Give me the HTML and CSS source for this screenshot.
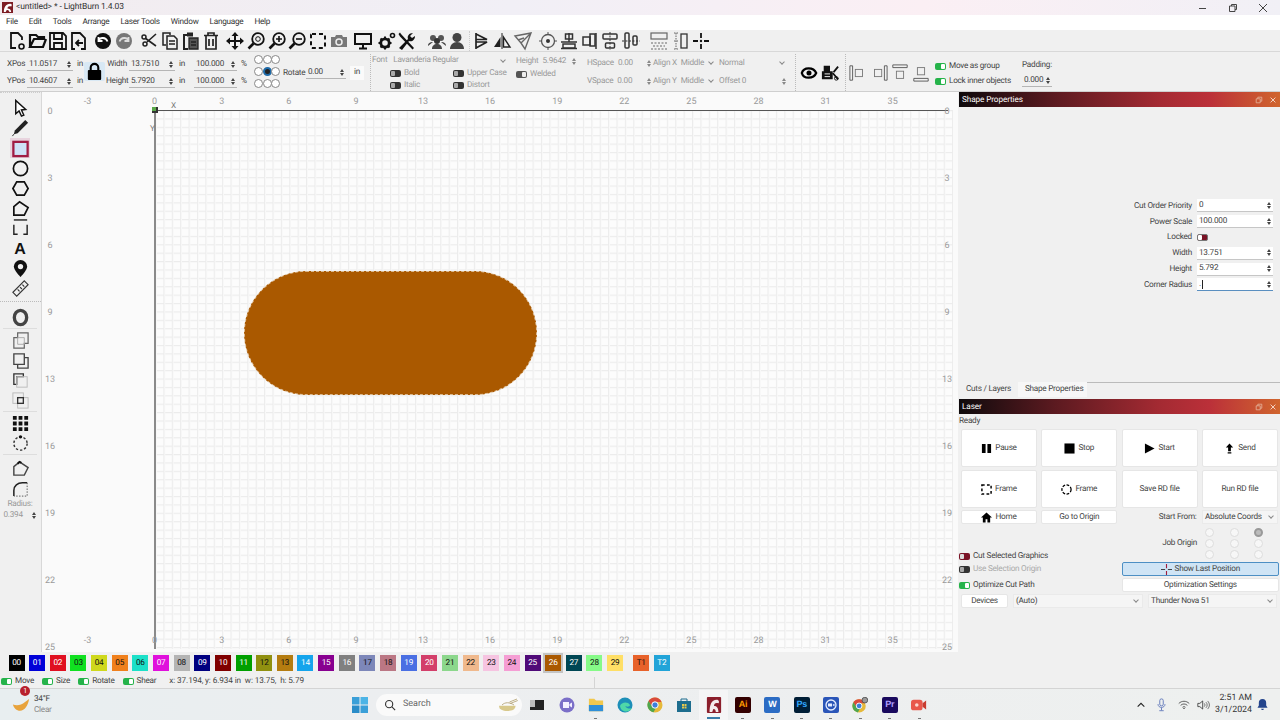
FILE: index.html
```html
<!DOCTYPE html>
<html lang="en">
<head>
    <meta charset="UTF-8">
    <title>LightBurn 1.4.03</title>
    <link rel="stylesheet" href="styles.css">
</head>
<body>

<div class="titlebar">
    <svg class="logo" viewBox="0 0 12 12"><rect width="12" height="12" fill="#7d1d24"/><path d="M2 11C2 6 4 2 9 2c2 0 2 2 1 3-2-1-4 0-4 2 2 0 4 1 4 4H8C8 9 6 8 5 9l-1 2z" fill="#fff"/></svg>
    <span class="wintitle">&lt;untitled&gt; * - LightBurn 1.4.03</span>
    <div class="winctl">
        <svg viewBox="0 0 10 10"><path d="M1 5.500h7" stroke="#444" fill="none"/></svg>
        <svg viewBox="0 0 10 10"><path d="M1.500 3h5.500v5.500H1.500zM3.500 3V1.500h5v5H7" stroke="#444" fill="none"/></svg>
        <svg viewBox="0 0 10 10"><path d="M1 1l8 8M9 1l-8 8" stroke="#444" fill="none"/></svg>
    </div>
</div>

<div class="menubar">
    <span>File</span><span>Edit</span><span>Tools</span><span>Arrange</span><span>Laser Tools</span><span>Window</span><span>Language</span><span>Help</span>
</div>

<div class="toolbar">
    <div class="tgroup">
        <svg viewBox="0 0 20 20"><path d="M9 17H4V2h7l4 4v3" fill="none" stroke="#111" stroke-width="1.800"/><circle cx="14.500" cy="15.500" r="2.500" fill="none" stroke="#111" stroke-width="1.600"/></svg>
        <svg viewBox="0 0 20 20"><path d="M2 16V4h6l2 2h6v2H6l-4 8h13l3-8" fill="none" stroke="#111" stroke-width="2.200"/></svg>
        <svg viewBox="0 0 20 20"><path d="M2 2h13l3 3v13H2zM6 3v5h8V3M6 18v-6h8v6" fill="none" stroke="#111" stroke-width="1.800"/></svg>
        <svg viewBox="0 0 20 20"><path d="M6 18H3V2h8l5 5v11h-4" fill="none" stroke="#111" stroke-width="1.800"/><path d="M7 12h7M10 9l-3 3 3 3" fill="none" stroke="#111" stroke-width="1.800"/></svg>
    </div>
    <div class="tgroup gap4">
        <svg viewBox="0 0 20 20"><circle cx="10" cy="10" r="8" fill="#111"/><path d="M5.500 9.500C7 6 13 6 14.500 10.500M5.500 6v4h4" fill="none" stroke="#fff" stroke-width="1.800"/></svg>
        <svg viewBox="0 0 20 20"><circle cx="10" cy="10" r="8" fill="#777"/><path d="M14.500 9.500C13 6 7 6 5.500 10.500M14.500 6v4h-4" fill="none" stroke="#ddd" stroke-width="1.800"/></svg>
    </div>
    <div class="tgroup gap5">
        <svg viewBox="0 0 20 20"><path d="M17 3L8 11M17 15L6 7" stroke="#222" stroke-width="1.600" fill="none"/><circle cx="5" cy="6" r="2" fill="none" stroke="#222" stroke-width="1.500"/><circle cx="6" cy="13" r="2" fill="none" stroke="#222" stroke-width="1.500"/></svg>
        <svg viewBox="0 0 20 20"><path d="M6 14H3V2h7v2" fill="none" stroke="#222" stroke-width="1.500"/><path d="M7 5h7l3 3v10H7zM9 10h6M9 13h6" fill="none" stroke="#222" stroke-width="1.500"/></svg>
        <svg viewBox="0 0 20 20"><path d="M6 4H3v14h4" fill="none" stroke="#222" stroke-width="2"/><rect x="6" y="1.500" width="6" height="4" fill="#222"/><path d="M8 7h9v11H8zM10 11h5M10 14h5" fill="#555" stroke="#222" stroke-width="1.300"/></svg>
        <svg viewBox="0 0 20 20"><path d="M3 4.500h14M7 4V2h6v2M5 5v13h10V5M8 8v7M12 8v7" fill="none" stroke="#222" stroke-width="1.700"/></svg>
    </div>
    <div class="tgroup gap4">
        <svg viewBox="0 0 20 20"><path d="M10 3v14M3 10h14" stroke="#111" stroke-width="2"/><path d="M10 1l3.500 4h-7zM10 19l3.500-4h-7zM1 10l4-3.500v7zM19 10l-4-3.500v7z" fill="#111"/></svg>
        <svg viewBox="0 0 20 20"><circle cx="12" cy="8" r="5.800" fill="none" stroke="#111" stroke-width="1.800"/><path d="M7.500 12.500l-5 5" stroke="#111" stroke-width="2.600"/><circle cx="12" cy="8" r="2.300" fill="none" stroke="#111"/></svg>
        <svg viewBox="0 0 20 20"><circle cx="12" cy="8" r="5.800" fill="none" stroke="#111" stroke-width="1.800"/><path d="M7.500 12.500l-5 5" stroke="#111" stroke-width="2.600"/><path d="M9 8h6M12 5v6" stroke="#111" stroke-width="1.600"/></svg>
        <svg viewBox="0 0 20 20"><circle cx="12" cy="8" r="5.800" fill="none" stroke="#111" stroke-width="1.800"/><path d="M7.500 12.500l-5 5" stroke="#111" stroke-width="2.600"/><path d="M9 8h6" stroke="#111" stroke-width="1.600"/></svg>
        <svg viewBox="0 0 20 20"><rect x="3" y="3" width="14" height="14" rx="1" fill="none" stroke="#111" stroke-width="2" stroke-dasharray="4 3"/></svg>
        <svg viewBox="0 0 20 20"><path d="M2 6h4l1-2h6l1 2h4v10H2z" fill="#777"/><circle cx="10" cy="11" r="3" fill="none" stroke="#eee" stroke-width="1.500"/></svg>
    </div>
    <div class="tgroup gap4">
        <svg viewBox="0 0 20 20"><path d="M2 3h16v10H2zM10 13v4M6 17.500h8" fill="none" stroke="#111" stroke-width="2"/></svg>
    </div>
    <div class="tgroup gap4">
        <svg viewBox="0 0 20 20"><circle cx="8" cy="12" r="4.200" fill="none" stroke="#111" stroke-width="2.800"/><path d="M8 5.500v2.500M8 16v2.500M1.500 12H4M12 12h2.500M3.500 7.500l1.500 1.500M11 15l1.500 1.500M3.500 16.500L5 15M11 9l1.500-1.500" stroke="#111" stroke-width="2"/><circle cx="15.500" cy="4.500" r="2" fill="none" stroke="#111" stroke-width="1.600"/></svg>
        <svg viewBox="0 0 20 20"><path d="M2 17L11 8c-1-3 1-6 5-6l-3 3 2 2 3-2c0 4-3 6-6 5l-7 9z" fill="#111"/><path d="M4 3l13 14-1.500 1.500L3 5.500 1.500 3 3 1.500z" fill="#111"/></svg>
    </div>
    <div class="tgroup gap9">
        <svg viewBox="0 0 20 20"><circle cx="6" cy="7" r="3" fill="#555"/><circle cx="14" cy="7" r="3" fill="#555"/><circle cx="10" cy="10" r="3" fill="#333"/><path d="M1 15c0-3 2-4 5-4M19 15c0-3-2-4-5-4M5 18c0-3 2-5 5-5s5 2 5 5z" fill="#444"/></svg>
        <svg viewBox="0 0 20 20"><circle cx="10" cy="6.500" r="4.500" fill="#444"/><path d="M3 18c0-4 3-7 7-7s7 3 7 7z" fill="#444"/></svg>
    </div>
    <div class="tgroup sepl">
        <svg viewBox="0 0 20 20"><path d="M4 2v16M4 3l11 5.500H4M4 11h11L4 17" fill="none" stroke="#222" stroke-width="1.700"/></svg>
        <svg viewBox="0 0 20 20"><path d="M10 2v16" stroke="#222"/><path d="M8.500 6v10H2z" fill="#222"/><path d="M11.500 6v10H18z" fill="none" stroke="#222" stroke-width="1.400"/></svg>
        <svg viewBox="0 0 20 20"><path d="M2 5l16-3-6 16-4-6zM8 12l10-10M5 9l6-2" fill="none" stroke="#666" stroke-width="1.400"/></svg>
    </div>
    <div class="tgroup gap5">
        <svg viewBox="0 0 20 20"><circle cx="10" cy="10" r="6.500" fill="none" stroke="#555" stroke-width="1.300"/><circle cx="10" cy="10" r="2" fill="#333"/><path d="M10 1v3M10 16v3M1 10h3M16 10h3" stroke="#555"/></svg>
        <svg viewBox="0 0 20 20"><path d="M2 11h16M10 2v9M2 17.500h16" stroke="#333" stroke-width="1.500"/><rect x="6.500" y="3" width="7" height="5" fill="none" stroke="#333" stroke-width="1.500"/><rect x="4" y="13" width="12" height="4" fill="none" stroke="#333" stroke-width="1.500"/></svg>
        <svg viewBox="0 0 20 20"><path d="M16 2v16" stroke="#333" stroke-width="1.500"/><rect x="3" y="6" width="7" height="8" fill="none" stroke="#333" stroke-width="1.500"/><rect x="10" y="3" width="5" height="12" fill="none" stroke="#333" stroke-width="1.500"/></svg>
        <svg viewBox="0 0 20 20"><path d="M10 1v18" stroke="#333" stroke-dasharray="2 1.500"/><rect x="3" y="3" width="14" height="5" rx="1" fill="none" stroke="#333" stroke-width="1.500"/><rect x="5.500" y="12" width="9" height="5" rx="1" fill="none" stroke="#333" stroke-width="1.500"/></svg>
        <svg viewBox="0 0 20 20"><path d="M1 10h18" stroke="#333" stroke-dasharray="2 1.500"/><rect x="4" y="2" width="4" height="15" rx="1" fill="none" stroke="#333" stroke-width="1.500"/><rect x="12" y="5" width="4" height="9" rx="1" fill="none" stroke="#333" stroke-width="1.500"/></svg>
    </div>
    <div class="tgroup gap8">
        <svg viewBox="0 0 20 20"><rect x="2" y="2" width="16" height="6" fill="none" stroke="#666" stroke-width="1.200"/><path d="M2 12h16M2 18h16M4 15h12" stroke="#666" stroke-dasharray="2 1.500"/></svg>
        <svg viewBox="0 0 20 20"><path d="M4 2h4M6 2v16M4 18h4M4 10h4" stroke="#666" stroke-dasharray="1.500 1"/><rect x="11" y="3" width="6" height="14" fill="none" stroke="#333" stroke-width="1.300"/></svg>
        <svg viewBox="0 0 20 20"><path d="M10 2v5M10 13v5M2 10h5M13 10h5" stroke="#111" stroke-width="1.800"/><circle cx="10" cy="10" r="1.200" fill="#111"/></svg>
    </div>
</div>

<div class="props">
    <div class="pcol w77">
        <div class="fld"><span class="lb">XPos</span><span class="val w47">11.0517<i class="spin"></i></span><span class="un">in</span></div>
        <div class="fld"><span class="lb">YPos</span><span class="val w47">10.4607<i class="spin"></i></span><span class="un">in</span></div>
    </div>
    <div class="lockbtn">
        <svg viewBox="0 0 20 20"><path d="M6 9V6a4 4 0 018 0v3" fill="none" stroke="#000" stroke-width="2.200"/><rect x="3" y="8.500" width="14" height="10.500" rx="1" fill="#000"/></svg>
    </div>
    <div class="pcol w85">
        <div class="fld"><span class="lb rt20">Width</span><span class="val w46">13.7510<i class="spin"></i></span><span class="un">in</span></div>
        <div class="fld"><span class="lb rt20">Height</span><span class="val w46">5.7920<i class="spin"></i></span><span class="un">in</span></div>
    </div>
    <div class="pcol w60">
        <div class="fld"><span class="val w43 ml4">100.000<i class="spin"></i></span><span class="un">%</span></div>
        <div class="fld"><span class="val w43 ml4">100.000<i class="spin"></i></span><span class="un">%</span></div>
    </div>
    <div class="radios">
        <i></i><i></i><i></i><i></i><i class="sel"></i><i></i><i></i><i></i><i></i>
    </div>
    <div class="rotate">
        <span class="lb">Rotate</span><span class="val w40">0.00<i class="spin"></i></span><span class="inbtn">in</span>
    </div>
    <div class="fontsec">
        <div class="fc w144">
            <div class="frow"><span>Font</span><span class="combo w118">Lavanderia Regular<i class="chev"></i></span></div>
            <div class="ftogs">
                <span class="tline"><i class="tog off"></i>Bold</span>
                <span class="tline"><i class="tog off"></i>Upper Case</span>
                <span class="tline"><i class="tog off"></i>Italic</span>
                <span class="tline"><i class="tog off"></i>Distort</span>
            </div>
        </div>
        <div class="fc w71">
            <div class="frow"><span>Height</span><span class="val w38 noline">5.9642<i class="spin"></i></span></div>
            <div class="tline up"><i class="tog midoff"></i>Welded</div>
        </div>
        <div class="fc w67 two">
            <div class="frow"><span>HSpace</span><span class="val w38 noline">0.00<i class="spin"></i></span></div>
            <div class="frow"><span>VSpace</span><span class="val w38 noline">0.00<i class="spin"></i></span></div>
        </div>
        <div class="fc w66 two">
            <div class="frow"><span>Align X</span><span class="combo w38 noline">Middle<i class="chev"></i></span></div>
            <div class="frow"><span>Align Y</span><span class="combo w38 noline">Middle<i class="chev"></i></span></div>
        </div>
        <div class="fc w71 two">
            <div class="frow"><span class="combo w71 noline">Normal<i class="chev"></i></span></div>
            <div class="frow"><span class="val w71 noline">Offset 0<i class="spin"></i></span></div>
        </div>
    </div>
    <div class="camsec">
        <svg viewBox="0 0 20 20"><path d="M2 10c2-7 13-7 16 0-3 7-14 7-16 0z" fill="none" stroke="#000" stroke-width="2.500"/><circle cx="10" cy="10" r="2.800" fill="#000"/></svg>
        <svg viewBox="0 0 20 20"><path d="M3 8V2h7v6h3v9H1V8z" fill="#111"/><path d="M19 3l-5 6M19 17l-6-7" stroke="#111" stroke-width="2"/><circle cx="17" cy="16" r="2" fill="none" stroke="#111"/><path d="M4 11h6M4 14h6" stroke="#fff"/></svg>
    </div>
    <div class="alignsec">
        <svg viewBox="0 0 20 20"><path d="M1 2h3v16H1z" fill="none" stroke="#555"/><rect x="7" y="6" width="8" height="8" fill="none" stroke="#777"/></svg>
        <svg viewBox="0 0 20 20"><path d="M16 2h3v16h-3z" fill="none" stroke="#555"/><rect x="5" y="6" width="8" height="8" fill="none" stroke="#777"/></svg>
        <svg viewBox="0 0 20 20"><path d="M2 1h16v3H2z" fill="none" stroke="#555"/><rect x="6" y="8" width="8" height="8" fill="none" stroke="#777"/></svg>
        <svg viewBox="0 0 20 20"><path d="M2 16h16v3H2z" fill="none" stroke="#555"/><rect x="6" y="4" width="8" height="8" fill="none" stroke="#777"/></svg>
    </div>
    <div class="groupsec">
        <span class="tline"><i class="tog on"></i>Move as group</span>
        <span class="tline"><i class="tog on"></i>Lock inner objects</span>
    </div>
    <div class="padsec">
        <span class="padlabel">Padding:</span>
        <span class="val w32">0.000<i class="spin"></i></span>
    </div>
</div>

<div class="middle">
    <div class="tools">
        <div class="tslot"><svg viewBox="0 0 20 20"><path d="M5 1.500v14l3.500-3 2.500 5.500 2.500-1-2.500-5.500 4.500-.5z" fill="#fff" stroke="#111" stroke-width="1.500"/></svg></div>
        <div class="tslot"><svg viewBox="0 0 20 20"><path d="M15 1l3 3L7 15l-4 1 1-4z" fill="#222"/><path d="M3 16L1.500 18" stroke="#222"/></svg></div>
        <div class="tslot active"><svg viewBox="0 0 20 20"><rect x="2.500" y="3" width="15" height="15" fill="#cfe2f7" stroke="#a01c44" stroke-width="2.400"/></svg></div>
        <div class="tslot"><svg viewBox="0 0 20 20"><circle cx="10" cy="10" r="7.500" fill="none" stroke="#111" stroke-width="1.800"/></svg></div>
        <div class="tslot"><svg viewBox="0 0 20 20"><path d="M6 3h8l4 7-4 7H6l-4-7z" fill="none" stroke="#111" stroke-width="1.800"/></svg></div>
        <div class="tslot"><svg viewBox="0 0 20 20"><path d="M3 8l6-5 9 6-4 8H3z" fill="none" stroke="#111" stroke-width="1.800"/></svg></div>
        <div class="tslot"><svg viewBox="0 0 20 20"><path d="M3 1h14" stroke="#222" stroke-width="1.500"/><path d="M3 6v10h4M17 6v10h-4" fill="none" stroke="#222" stroke-width="1.500"/></svg></div>
        <div class="tslot"><span class="aglyph">A</span></div>
        <div class="tslot"><svg viewBox="0 0 20 20"><path d="M10 1a7 7 0 00-7 7c0 4 7 11 7 11s7-7 7-11a7 7 0 00-7-7z" fill="#111"/><circle cx="10" cy="8" r="2.800" fill="#f0f0f0"/></svg></div>
        <div class="tslot"><svg viewBox="0 0 20 20"><path d="M14 2l4 4L6 18l-4-4zM12 6l2 2M9.500 8.500l2 2M7 11l2 2" fill="none" stroke="#333" stroke-width="1.200"/></svg></div>
        <div class="dots"></div>
        <div class="tslot"><svg viewBox="0 0 20 20"><ellipse cx="10" cy="10" rx="6.500" ry="7.500" fill="none" stroke="#444" stroke-width="3.500"/></svg></div>
        <div class="divider"></div>
        <div class="tslot"><svg viewBox="0 0 20 20"><path d="M7 2h11v11h-4v5H3V7h4z" fill="none" stroke="#666" stroke-width="1.300"/><path d="M7 7h7v7H7z" fill="none" stroke="#aaa"/></svg></div>
        <div class="tslot"><svg viewBox="0 0 20 20"><path d="M3 3h11v11H3z" fill="none" stroke="#444" stroke-width="1.400"/><path d="M7 14v4h11V7h-4" fill="none" stroke="#444" stroke-width="1.400"/></svg></div>
        <div class="tslot"><svg viewBox="0 0 20 20"><path d="M3 3h10v3H6v8H3z" fill="none" stroke="#333" stroke-width="1.400"/><rect x="6" y="6" width="11" height="11" fill="none" stroke="#bbb"/></svg></div>
        <div class="tslot"><svg viewBox="0 0 20 20"><rect x="2" y="2" width="11" height="11" fill="none" stroke="#bbb"/><rect x="7" y="7" width="11" height="11" fill="none" stroke="#bbb"/><rect x="7" y="7" width="6" height="6" fill="none" stroke="#333" stroke-width="1.400"/></svg></div>
        <div class="divider"></div>
        <div class="tslot"><svg viewBox="0 0 20 20"><path d="M2 2h4v4H2zM8 2h4v4H8zM14 2h4v4h-4zM2 8h4v4H2zM8 8h4v4H8zM14 8h4v4h-4zM2 14h4v4H2zM8 14h4v4H8zM14 14h4v4h-4z" fill="#111"/></svg></div>
        <div class="tslot"><svg viewBox="0 0 20 20"><circle cx="10" cy="10" r="7" fill="none" stroke="#333" stroke-width="1.500" stroke-dasharray="2.500 2"/><circle cx="10" cy="3" r="1.800" fill="#111"/></svg></div>
        <div class="divider lastdiv"></div>
        <div class="tslot"><svg viewBox="0 0 20 20"><path d="M3 8l6-5 9 6-4 8H3z" fill="none" stroke="#444" stroke-width="1.500"/><path d="M7 5l2-2 2 1" fill="none" stroke="#111" stroke-width="2"/></svg></div>
        <div class="tslot"><svg viewBox="0 0 20 20"><path d="M3 18v-6C3 7 7 4 12 4h5" fill="none" stroke="#222" stroke-width="1.600"/><path d="M17 4v14H3" fill="none" stroke="#555" stroke-dasharray="1.500 1.500"/></svg></div>
        <div class="radlabel">Radius:</div>
        <div class="radval">0.394<i class="spin"></i></div>
    </div>

    <div class="canvas">
        <div class="grid"></div>
        <div class="axis-x"></div>
        <div class="axis-y"></div>
        <div class="origin"></div>
        <span class="axlabel xl">X</span>
        <span class="axlabel yl">Y</span>
        <div class="shape"></div>
        <div class="ruler htop"><span>-3</span><span>0</span><span>3</span><span>6</span><span>9</span><span>13</span><span>16</span><span>19</span><span>22</span><span>25</span><span>28</span><span>31</span><span>35</span></div>
        <div class="ruler hbot"><span>-3</span><span>0</span><span>3</span><span>6</span><span>9</span><span>13</span><span>16</span><span>19</span><span>22</span><span>25</span><span>28</span><span>31</span><span>35</span></div>
        <div class="ruler vleft"><span>0</span><span>3</span><span>6</span><span>9</span><span>13</span><span>16</span><span>19</span><span>22</span><span>25</span></div>
        <div class="ruler vright"><span>0</span><span>3</span><span>6</span><span>9</span><span>13</span><span>16</span><span>19</span><span>22</span><span>25</span></div>
    </div>

    <div class="side">
        <div class="dock-title">
            <span>Shape Properties</span>
            <svg viewBox="0 0 10 10"><path d="M1.500 3.500h5v5h-5zM3.500 3.500v-2h5v5h-2" fill="none" stroke="#e6b8a0"/></svg>
            <svg viewBox="0 0 10 10"><path d="M2 2l6 6M8 2l-6 6" stroke="#f3d6c8" stroke-width="1.200"/></svg>
        </div>
        <div class="shape-form">
            <div class="sf-row"><label>Cut Order Priority</label><span class="sf-in">0<i class="spin"></i></span></div>
            <div class="sf-row"><label>Power Scale</label><span class="sf-in">100.000<i class="spin"></i></span></div>
            <div class="sf-row"><label>Locked</label><i class="tog lockedtog"></i></div>
            <div class="sf-row"><label>Width</label><span class="sf-in">13.751<i class="spin"></i></span></div>
            <div class="sf-row"><label>Height</label><span class="sf-in">5.792<i class="spin"></i></span></div>
            <div class="sf-row"><label>Corner Radius</label><span class="sf-in focus">.<b class="caret"></b><i class="spin"></i></span></div>
        </div>
        <div class="tabs">
            <span class="tab">Cuts / Layers</span>
            <span class="tab cur">Shape Properties</span>
        </div>
        <div class="dock-title">
            <span>Laser</span>
            <svg viewBox="0 0 10 10"><path d="M1.500 3.500h5v5h-5zM3.500 3.500v-2h5v5h-2" fill="none" stroke="#e6b8a0"/></svg>
            <svg viewBox="0 0 10 10"><path d="M2 2l6 6M8 2l-6 6" stroke="#f3d6c8" stroke-width="1.200"/></svg>
        </div>
        <div class="ready">Ready</div>
        <div class="bigbtns">
            <div class="btn"><svg viewBox="0 0 12 12"><path d="M1 1h4v10H1zM7 1h4v10H7z" fill="#000"/></svg>Pause</div>
            <div class="btn"><svg viewBox="0 0 12 12"><path d="M0.500 0.500h11v11h-11z" fill="#000"/></svg>Stop</div>
            <div class="btn"><svg viewBox="0 0 12 12"><path d="M1 0.500l10.500 5.500L1 11.500z" fill="#000"/></svg>Start</div>
            <div class="btn"><svg viewBox="0 0 12 12"><path d="M6 0.500L10 5H7.500v4h-3V5H2zM4 10h4v1.500H4z" fill="#000"/></svg>Send</div>
            <div class="btn"><svg viewBox="0 0 12 12"><rect x="1" y="1" width="10" height="10" fill="none" stroke="#000" stroke-width="1.600" stroke-dasharray="3 2.500"/></svg>Frame</div>
            <div class="btn"><svg viewBox="0 0 12 12"><circle cx="6" cy="6" r="5" fill="none" stroke="#000" stroke-width="1.400" stroke-dasharray="3 1.600"/></svg>Frame</div>
            <div class="btn">Save RD file</div>
            <div class="btn">Run RD file</div>
        </div>
        <div class="smallbtns">
            <div class="btn"><svg viewBox="0 0 12 12"><path d="M6 0.500L0 6h2v5.500h3V8h2v3.500h3V6h2z" fill="#000"/></svg>Home</div>
            <div class="btn">Go to Origin</div>
            <span class="rlabel">Start From:</span>
            <div class="select">Absolute Coords<i class="chev"></i></div>
        </div>
        <div class="lower">
            <div class="lower-left">
                <span class="tline"><i class="tog redon"></i>Cut Selected Graphics</span>
                <span class="tline dim"><i class="tog off"></i>Use Selection Origin</span>
                <span class="tline opt"><i class="tog on"></i>Optimize Cut Path</span>
            </div>
            <div class="lower-right">
                <div class="origin-row">
                    <span class="rlabel">Job Origin</span>
                    <div class="joborigin"><i></i><i></i><i class="sel"></i><i></i><i></i><i></i><i></i><i></i><i></i></div>
                </div>
                <div class="btn widebtn blue"><svg viewBox="0 0 12 12"><path d="M0 6h4.500M7.500 6H12" stroke="#333"/><path d="M6 0v4.500M6 7.500V12" stroke="#a01c3c" stroke-width="1.200"/></svg>Show Last Position</div>
                <div class="btn widebtn">Optimization Settings</div>
            </div>
        </div>
        <div class="devices">
            <div class="btn devbtn">Devices</div>
            <div class="select wauto">(Auto)<i class="chev"></i></div>
            <div class="select wnova">Thunder Nova 51<i class="chev"></i></div>
        </div>
    </div>
</div>

<div class="palette">
    <span class="swatch c00">00</span><span class="swatch c01">01</span><span class="swatch c02">02</span><span class="swatch c03">03</span><span class="swatch c04">04</span><span class="swatch c05">05</span><span class="swatch c06">06</span><span class="swatch c07">07</span><span class="swatch c08">08</span><span class="swatch c09">09</span>
    <span class="swatch c10">10</span><span class="swatch c11">11</span><span class="swatch c12">12</span><span class="swatch c13">13</span><span class="swatch c14">14</span><span class="swatch c15">15</span><span class="swatch c16">16</span><span class="swatch c17">17</span><span class="swatch c18">18</span><span class="swatch c19">19</span>
    <span class="swatch c20">20</span><span class="swatch c21">21</span><span class="swatch c22">22</span><span class="swatch c23">23</span><span class="swatch c24">24</span><span class="swatch c25">25</span><span class="swatch c26 picked">26</span><span class="swatch c27">27</span><span class="swatch c28">28</span><span class="swatch c29">29</span>
    <span class="swatch t1">T1</span><span class="swatch t2">T2</span>
</div>

<div class="statusbar">
    <span class="tline"><i class="tog on"></i>Move</span>
    <span class="tline"><i class="tog on"></i>Size</span>
    <span class="tline"><i class="tog on"></i>Rotate</span>
    <span class="tline"><i class="tog on"></i>Shear</span>
    <span class="coords">x: 37.194, y: 6.934 in&nbsp; w: 13.75,&nbsp; h: 5.79</span>
    <span class="vsep"></span>
</div>

<div class="taskbar">
    <div class="weather">
        <svg viewBox="0 0 20 16"><path d="M1 8c3 1 6 1 9 0 3-1 6-4 9-6-1 7-5 13-10 13C5 15 2 12 1 8z" fill="#e8a33c"/></svg>
        <b class="badge">1</b>
        <div class="wtext"><span>34°F</span><span class="clear">Clear</span></div>
    </div>
    <svg class="winlogo" viewBox="0 0 16 16"><path d="M0 0h7.500v7.500H0z" fill="#3a9fd8"/><path d="M8.500 0H16v7.500H8.500z" fill="#4cb4e6"/><path d="M0 8.500h7.500V16H0z" fill="#2a8cc8"/><path d="M8.500 8.500H16V16H8.500z" fill="#3a9fd8"/></svg>
    <div class="searchbox">
        <svg viewBox="0 0 14 14"><circle cx="6" cy="6" r="4.200" fill="none" stroke="#333" stroke-width="1.300"/><path d="M9 9l4 4" stroke="#333" stroke-width="1.300"/></svg>
        <span>Search</span>
        <svg class="noodles" viewBox="0 0 32 18"><path d="M4 10h22c0 5-5 7-11 7S4 15 4 10z" fill="#d8c98c"/><path d="M8 9c4-4 10-4 16 0M18 5l10-4M19 7l10-4" stroke="#a89560" fill="none"/></svg>
    </div>
    <div class="apps">
        <div class="app"><svg viewBox="0 0 16 16"><rect x="1" y="3" width="10" height="10" fill="#bbb"/><rect x="6" y="3" width="9" height="10" fill="#222"/><rect x="1" y="10" width="14" height="3" fill="#222"/></svg></div>
        <div class="app"><svg viewBox="0 0 16 16"><circle cx="8" cy="8" r="7.500" fill="#7b6fc8"/><path d="M4 5h6v6H4zM10.500 7l2.500-1.500v5L10.500 9z" fill="#f4f0ff"/></svg></div>
        <div class="app run"><svg viewBox="0 0 18 16"><path d="M1 1h6l2 2h8v12H1z" fill="#f1c84e"/><path d="M1 8h16v7H1z" fill="#2f8fd8"/></svg></div>
        <div class="app"><svg viewBox="0 0 16 16"><circle cx="8" cy="8" r="7.500" fill="#1d8fb8"/><path d="M3 9c1-4 8-5 10-1 0 2-4 2-5 1 2 3 5 3 7 2-2 5-11 5-12-2z" fill="#4fd8a8"/></svg></div>
        <div class="app"><svg viewBox="0 0 16 16"><circle cx="8" cy="8" r="7.500" fill="#e6b93a"/><path d="M8 .5A7.500 7.500 0 001.500 4l3 5L8 5h6.500A7.500 7.500 0 008 .5z" fill="#d94a3c"/><path d="M1.500 4a7.500 7.500 0 005 11.300l3-5.300-4 0z" fill="#4fa64f"/><circle cx="8" cy="8" r="3.200" fill="#3d7fdc" stroke="#fff"/></svg></div>
        <div class="app"><svg viewBox="0 0 16 16"><path d="M1 4h14v11H1z" fill="#1d6d8e"/><path d="M5 4V2h6v2" fill="none" stroke="#1d6d8e"/><path d="M6 7h2v2H6zM8.500 7h2v2h-2zM6 9.500h2v2H6zM8.500 9.500h2v2h-2z" fill="#e6c84e"/></svg></div>
        <div class="app cur"><svg viewBox="0 0 16 18"><rect width="16" height="18" rx="1" fill="#8c1f2c"/><path d="M3 17C3 9 5 3 11 3c3 0 3 3 2 4-3-1-5 0-5 3 3 0 5 2 5 7h-3c0-3-2-4-3-3l-1 3z" fill="#f4ecec"/></svg></div>
        <div class="app run"><span class="adobe ai">Ai</span></div>
        <div class="app run"><span class="adobe wd">W</span></div>
        <div class="app run"><span class="adobe ps">Ps</span></div>
        <div class="app run"><svg viewBox="0 0 16 16"><rect width="16" height="16" rx="2" fill="#2a55b8"/><circle cx="8" cy="8" r="5" fill="none" stroke="#e6eeff" stroke-width="1.300"/><path d="M5 6.500h4v3H5zM9.500 8l2-1.500v3z" fill="#e6eeff"/></svg></div>
        <div class="app run"><svg viewBox="0 0 18 18"><circle cx="8" cy="10" r="7.500" fill="#e6b93a"/><path d="M8 2.500A7.500 7.500 0 001.500 6l3 5L8 7h6.500A7.500 7.500 0 008 2.500z" fill="#d94a3c"/><path d="M1.500 6a7.500 7.500 0 005 11.300l3-5.300-4 0z" fill="#4fa64f"/><circle cx="8" cy="10" r="3.200" fill="#3d7fdc" stroke="#fff"/><circle cx="14.500" cy="3.500" r="3.200" fill="#999" stroke="#555"/></svg></div>
        <div class="app run"><span class="adobe pr">Pr</span></div>
        <div class="app run"><svg viewBox="0 0 18 14"><rect y="1" width="13" height="12" rx="3" fill="#e8584c"/><path d="M13 5l4-3v10l-4-3z" fill="#c83c30"/><circle cx="6.500" cy="7" r="2" fill="#fbd8d0"/></svg></div>
    </div>
    <div class="tray">
        <svg viewBox="0 0 12 12" class="t-chev"><path d="M2 8l4-4 4 4" fill="none" stroke="#222" stroke-width="1.300"/></svg>
        <svg viewBox="0 0 12 16" class="t-mic"><rect x="4" y="1" width="4" height="8" rx="2" fill="none" stroke="#5a72b8"/><path d="M2 7c0 5 8 5 8 0M6 11v3M3.500 14.500h5" fill="none" stroke="#5a72b8"/></svg>
        <svg viewBox="0 0 16 12" class="t-wifi"><path d="M1 4c4-4 10-4 14 0M3.500 6.500c2.500-2.500 6.500-2.500 9 0M6 9c1-1 3-1 4 0" fill="none" stroke="#333"/><circle cx="8" cy="10.500" r=".9" fill="#333"/></svg>
        <svg viewBox="0 0 16 12" class="t-vol"><path d="M1 4h2.500L7 1v10L3.500 8H1z" fill="none" stroke="#333"/><path d="M9 4c1 1 1 3 0 4M11 2.500c2 2 2 5 0 7M13 1c3 3 3 7 0 10" fill="none" stroke="#333" stroke-width=".8"/></svg>
        <div class="clock"><span>2:51 AM</span><span>3/1/2024</span></div>
        <svg viewBox="0 0 12 14" class="t-bell"><path d="M6 1c-3 0-4 2-4 4v3L.5 10.500h11L10 8V5c0-2-1-4-4-4z" fill="#24458c"/><path d="M4.500 11.500c0 2 3 2 3 0z" fill="#24458c"/></svg>
    </div>
</div>

</body>
</html>
```

FILE: styles.css
```css
* {
    box-sizing: border-box;
}
html, body {
    margin: 0;
    padding: 0;
    width: 1280px;
    height: 720px;
    overflow: hidden;
}
body {
    font-family: Roboto, sans-serif;
    font-size: 8.2px;
    letter-spacing: -0.25px;
    color: #444;
    background-color: #f0f0f0;
    display: flex;
    flex-direction: column;
    line-height: 1;
    white-space: nowrap;
    text-rendering: geometricPrecision;
}
svg {
    display: block;
    flex: none;
}

/* window chrome */
.titlebar {
    height: 15px;
    display: flex;
    align-items: center;
    padding-left: 2px;
    font-size: 8.5px;
    letter-spacing: -0.12px;
    background: linear-gradient(90deg, #f2ecef, #f1eff6 40%, #fbeff4 72%, #f1f0f6);
}
.logo {
    width: 11px;
    height: 11px;
}
.wintitle {
    margin-left: 3px;
    color: #333;
}
.winctl {
    margin-left: auto;
    padding-right: 12px;
    display: flex;
    gap: 20px;
}
.winctl svg {
    width: 10px;
    height: 10px;
}
.menubar {
    height: 15px;
    background-color: #fff;
    display: flex;
    align-items: center;
    padding-left: 6px;
    gap: 11px;
    color: #333;
    font-size: 8.2px;
}

/* main toolbar */
.toolbar {
    height: 22px;
    display: flex;
    align-items: center;
    padding-left: 7px;
    border-bottom: 1px solid #d8d8d8;
}
.tgroup {
    display: flex;
    gap: 0.700px;
}
.tgroup svg {
    width: 20px;
    height: 20px;
}
.gap4 { margin-left: 4px; }
.gap5 { margin-left: 5.400px; }
.gap8 { margin-left: 8.200px; }
.gap9 { margin-left: 9.300px; }
.sepl {
    margin-left: 2px;
    padding-left: 1.300px;
    border-left: 1px dotted #ccc;
}

/* properties toolbar */
.props {
    height: 40px;
    display: flex;
    padding: 5px 0 0 7px;
    border-bottom: 1px solid #cfcfcf;
}
.pcol {
    display: flex;
    flex-direction: column;
    gap: 3px;
}
.w77 { width: 77px; }
.w85 { width: 84px; }
.w60 { width: 62px; }
.fld {
    display: flex;
    align-items: center;
    height: 14px;
    padding-top: 1px;
}
.lb {
    width: 18px;
}
.rt20 {
    width: 21px;
    text-align: right;
}
.val {
    display: flex;
    align-items: center;
    justify-content: space-between;
    height: 13px;
    padding: 0 1px 0 2px;
    border-bottom: 1px solid #b5b5b5;
    margin-left: 2px;
}
.noline {
    border-bottom: none;
}
.frow .val {
    margin-left: 0;
}
.w47 { width: 46px; }
.w46 { width: 46px; }
.w43 { width: 43px; }
.w40 { width: 40px; }
.w38 { width: 38px; }
.w32 { width: 30px; }
.ml4 { margin-left: 4px; }
.un {
    margin-left: 4px;
}
.spin {
    width: 7px;
    height: 10px;
    display: flex;
    flex-direction: column;
    align-items: center;
    justify-content: center;
    gap: 1px;
    flex: none;
}
.spin::before, .spin::after {
    content: "";
    border-left: 2px solid transparent;
    border-right: 2px solid transparent;
}
.spin::before {
    border-bottom: 3px solid #444;
}
.spin::after {
    border-top: 3px solid #444;
}
.lockbtn {
    width: 21px;
    height: 19px;
    margin: 5px 1px 0 0;
    padding: 0 1px;
    background-color: #d8e8f4;
    border-radius: 2px;
}
.lockbtn svg {
    width: 19px;
    height: 19px;
}
.radios {
    width: 26px;
    height: 36px;
    margin: -4px 0 0 2px;
    display: grid;
    grid-template-columns: repeat(3, 8.5px);
    grid-auto-rows: 12px;
    align-items: center;
}
.radios i {
    width: 9px;
    height: 9px;
    border: 1px solid #888;
    border-radius: 50%;
    background-color: #fff;
}
.radios .sel {
    border: 2px solid #1e6aa8;
    background-color: #222;
}
.rotate {
    width: 87px;
    margin: 9px 0 0 3px;
    display: flex;
    align-items: flex-start;
}
.rotate .lb {
    width: 22px;
    margin-top: 3px;
}
.rotate .val {
    margin-left: 1px;
}
.inbtn {
    width: 14px;
    height: 14px;
    margin-left: 4px;
    background-color: #fafafa;
    text-align: center;
    line-height: 13px;
}

/* font section, greyed out while a shape is selected */
.fontsec {
    width: 426px;
    height: 37px;
    margin-top: -3px;
    padding-left: 1px;
    display: flex;
    color: #999;
    border-left: 1px dotted #bbb;
    border-right: 1px dotted #bbb;
}
.fontsec .spin::before { border-bottom-color: #888; }
.fontsec .spin::after { border-top-color: #888; }
.fc {
    display: flex;
    flex-direction: column;
    flex: none;
}
.w144 { width: 144px; }
.w71 { width: 71px; }
.w67 { width: 66px; }
.w66 { width: 64px; }
.two {
    padding-top: 2px;
    gap: 4px;
}
.frow {
    display: flex;
    align-items: center;
    gap: 2px;
    height: 14px;
}
.combo {
    display: flex;
    align-items: center;
    justify-content: space-between;
    height: 13px;
    padding: 0 4px 0 2px;
}
.w118 {
    width: 118px;
    margin-left: 2px;
}
.chev {
    width: 4px;
    height: 4px;
    margin-top: -2px;
    border-right: 1px solid #888;
    border-bottom: 1px solid #888;
    transform: rotate(45deg);
    flex: none;
}
.ftogs {
    display: grid;
    grid-template-columns: 63px 1fr;
    row-gap: 1px;
    padding-left: 18px;
    margin-top: 1px;
}
.tline {
    display: flex;
    align-items: center;
    gap: 3px;
    height: 11px;
}
.up {
    margin-top: 1px;
}
.tog {
    width: 11px;
    height: 7px;
    border-radius: 2px;
    flex: none;
    position: relative;
    display: block;
}
.tog::after {
    content: "";
    position: absolute;
    top: 1px;
    width: 4px;
    height: 5px;
    border-radius: 1px;
    background-color: #ddd;
}
.tog.on {
    background-color: #25b34a;
}
.tog.on::after {
    right: 1px;
    background-color: #fff;
}
.tog.off {
    background-color: #333;
}
.tog.off::after {
    left: 1px;
    background-color: #aaa;
}
.tog.midoff {
    background-color: #555;
}
.tog.midoff::after {
    right: 1px;
    background-color: #eee;
}
.tog.redon {
    background-color: #7a1326;
}
.tog.redon::after {
    left: 1px;
    background-color: #ddd;
}
.lockedtog {
    background-color: #7a1326;
    border: 1px solid #777;
}
.lockedtog::after {
    top: 0;
    left: 0;
    background-color: #fff;
}

.camsec {
    width: 50px;
    height: 37px;
    margin-top: -3px;
    padding-left: 4px;
    display: flex;
    align-items: center;
    gap: 3px;
    border-right: 1px dotted #bbb;
}
.camsec svg {
    width: 18px;
    height: 18px;
}
.alignsec {
    width: 89px;
    padding: 7px 0 0 3px;
    display: flex;
    gap: 3px;
}
.alignsec svg {
    width: 18px;
    height: 18px;
}
.groupsec {
    width: 87px;
    padding-top: 4px;
    display: flex;
    flex-direction: column;
    gap: 4px;
}
.padsec {
    display: flex;
    flex-direction: column;
    gap: 5px;
    padding-top: 4px;
}
.padsec .val {
    margin-left: 0;
}

/* middle area */
.middle {
    height: 560px;
    display: flex;
}
.tools {
    width: 42px;
    padding-top: 1px;
    border-right: 1px solid #d8d8d8;
    border-top: 1px dotted #ccc;
    display: flex;
    flex-direction: column;
    align-items: center;
}
.tools .tslot:first-child {
    margin-top: 4px;
}
.tslot {
    width: 20px;
    height: 20px;
    display: flex;
    align-items: center;
    justify-content: center;
    margin-right: 1px;
}
.tslot svg {
    width: 19px;
    height: 19px;
}
.tslot.active {
    background-color: #e8d4de;
}
.aglyph {
    padding-top: 3px;
    font-family: "Liberation Sans", sans-serif;
    font-weight: bold;
    font-size: 16px;
    color: #111;
}
.dots {
    width: 100%;
    height: 1px;
    margin: 3px 0 5px;
    border-top: 1px dotted #bbb;
}
.divider {
    width: 34px;
    height: 1px;
    margin: 1px 2px 1px 0;
    background-color: #ddd;
}
.lastdiv {
    margin-bottom: 3px;
}
.radlabel {
    margin: 2px 1px 0 0;
    color: #999;
}
.radval {
    margin-top: 2px;
    width: 34px;
    display: flex;
    justify-content: space-between;
    align-items: center;
    color: #999;
}

/* the drawing canvas */
.canvas {
    width: 916px;
    height: 560px;
    position: relative;
    background-color: #fafafa;
}
.grid {
    position: absolute;
    left: 113px;
    top: 18px;
    width: 798px;
    height: 539px;
    background-color: #fcfcfc;
    background-image:
        linear-gradient(90deg, #ececec 1px, #f8f8f8 1px, #f8f8f8 2px, transparent 2px),
        linear-gradient(#ececec 1px, #f8f8f8 1px, #f8f8f8 2px, transparent 2px);
    background-size: 8.4px 8.4px;
}
.axis-x {
    position: absolute;
    left: 113px;
    top: 18px;
    width: 793px;
    height: 1px;
    background-color: #555;
}
.axis-y {
    position: absolute;
    left: 112px;
    top: 18px;
    width: 2px;
    height: 539px;
    background-color: #8a8a8a;
}
.origin {
    position: absolute;
    left: 110px;
    top: 15px;
    width: 6px;
    height: 6px;
    background-color: #5aa84a;
    border-right: 2px solid #333;
    border-bottom: 2px solid #333;
}
.axlabel {
    position: absolute;
    color: #777;
}
.xl {
    left: 129px;
    top: 10px;
}
.yl {
    left: 108px;
    top: 33px;
}
.shape {
    position: absolute;
    left: 202px;
    top: 179px;
    width: 293px;
    height: 124px;
    border-radius: 62px;
    background-color: #aa5900;
    border: 1px dashed #dcb98e;
}
.ruler {
    position: absolute;
    display: flex;
    color: #999;
    font-size: 9px;
    letter-spacing: 0;
}
.ruler span {
    flex: none;
    display: flex;
    align-items: center;
    justify-content: center;
}
.htop, .hbot {
    left: 12px;
    height: 12px;
}
.htop span, .hbot span {
    width: 67.1px;
}
.htop {
    top: 4px;
}
.hbot {
    top: 543px;
}
.vleft, .vright {
    flex-direction: column;
    top: 16px;
    width: 14px;
    gap: 58px;
}
.vleft span, .vright span {
    height: 9px;
}
.vleft {
    left: 1px;
}
.vright {
    left: 898px;
}

/* right hand docks */
.side {
    width: 322px;
    display: flex;
    flex-direction: column;
}
.dock-title {
    height: 15px;
    margin-left: 1px;
    padding: 1px 3px 0;
    display: flex;
    align-items: center;
    gap: 6px;
    color: #fff;
    letter-spacing: -0.1px;
    background: linear-gradient(90deg, #0e0a0c, #5c1a20 30%, #a32a32 62%, #bb3039 78%, #d0652e);
}
.dock-title span {
    flex: 1;
}
.dock-title svg {
    width: 8px;
    height: 8px;
}
.shape-form {
    height: 273px;
    padding-top: 91px;
    display: flex;
    flex-direction: column;
    align-items: flex-end;
}
.sf-row {
    height: 15.800px;
    display: flex;
    align-items: center;
    width: 100%;
}
.sf-row label {
    width: 234px;
    text-align: right;
    margin-right: 5px;
}
.sf-in {
    width: 76px;
    height: 13px;
    padding: 0 1px 0 2px;
    display: flex;
    align-items: center;
    justify-content: space-between;
    background-color: #fff;
    border-bottom: 1px solid #c6c6c6;
    position: relative;
}
.sf-in.focus {
    border-bottom-color: #5a8fc0;
}
.caret {
    position: absolute;
    left: 5px;
    top: 2px;
    width: 1px;
    height: 9px;
    background-color: #222;
}
.tabs {
    height: 19px;
    padding: 2px 0 0 3px;
    display: flex;
    align-items: flex-start;
    background: linear-gradient(#bbb, #bbb) no-repeat 129px 2px / 193px 1px;
}
.tab {
    height: 15px;
    padding: 0 7px 0 5px;
    display: flex;
    align-items: center;
}
.tab.cur {
    background-color: #f7f7f7;
    padding: 0 4px 0 7px;
}
.ready {
    height: 15px;
    padding: 3px 0 0 1px;
}
.bigbtns, .smallbtns {
    margin-left: 3px;
    margin-right: 2px;
    display: grid;
    grid-template-columns: repeat(4, 76px);
    column-gap: 4.300px;
}
.bigbtns {
    grid-auto-rows: 38px;
    row-gap: 3px;
}
.smallbtns {
    margin-top: 2px;
    height: 14px;
}
.btn {
    display: flex;
    align-items: center;
    justify-content: center;
    gap: 3px;
    background-color: #fff;
    border: 1px solid #e6e6e6;
    border-radius: 2px;
}
.btn svg {
    width: 11px;
    height: 11px;
}
.rlabel {
    text-align: right;
    align-self: center;
    margin-right: 1px;
}
.select {
    height: 14px;
    padding: 0 4px 0 2px;
    display: flex;
    align-items: center;
    justify-content: space-between;
    background-color: #f5f5f5;
    border: 1px solid #eaeaea;
}
.lower {
    margin: 3px 2px 0 1px;
    display: grid;
    grid-template-columns: 163px 1fr;
    height: 66px;
}
.lower-left {
    padding-top: 23.500px;
    display: flex;
    flex-direction: column;
    gap: 2px;
}
.lower-left .opt {
    margin-top: 3px;
}
.dim {
    color: #aaa;
}
.lower-right {
    display: flex;
    flex-direction: column;
    gap: 2px;
}
.origin-row {
    height: 33px;
    display: grid;
    grid-template-columns: 76px 1fr;
    column-gap: 4px;
}
.joborigin {
    padding-left: 3px;
    display: grid;
    grid-template-columns: repeat(3, 24.500px);
    justify-items: start;
    align-items: center;
}
.joborigin i {
    width: 9px;
    height: 9px;
    border-radius: 50%;
    border: 1px solid #ddd;
    background-color: #f7f7f7;
}
.joborigin .sel {
    border: 2px solid #999;
    background-color: #bbb;
}
.widebtn {
    height: 14px;
}
.blue {
    background-color: #cfe4f5;
    border-color: #4d8fc4;
}
.devices {
    margin: 1px 2px 0 3px;
    height: 14px;
    display: flex;
    gap: 5px;
}
.devbtn {
    width: 47px;
}
.wauto { width: 130px; }
.wnova { width: 129px; }

/* cut palette */
.palette {
    height: 20px;
    padding: 3px 0 0 8.500px;
    display: flex;
    gap: 4.650px;
}
.swatch {
    width: 16px;
    height: 16px;
    flex: none;
    display: flex;
    align-items: center;
    justify-content: center;
    color: #111;
}
.c00, .c01, .c02, .c07, .c09, .c10, .c11, .c14, .c15, .c16, .c19, .c20, .c25, .c26, .c27, .t2 {
    color: #fff;
}
.c00 { background-color: #000; }
.c01 { background-color: #0000d8; }
.c02 { background-color: #e01020; }
.c03 { background-color: #10e020; }
.c04 { background-color: #cfd81c; }
.c05 { background-color: #f0801c; }
.c06 { background-color: #1ce0c8; }
.c07 { background-color: #e010dc; }
.c08 { background-color: #b4b4b4; }
.c09 { background-color: #000080; }
.c10 { background-color: #800000; }
.c11 { background-color: #00a000; }
.c12 { background-color: #909010; }
.c13 { background-color: #b47c10; }
.c14 { background-color: #14a4ec; }
.c15 { background-color: #880090; }
.c16 { background-color: #808080; }
.c17 { background-color: #7d87b9; }
.c18 { background-color: #bb7784; }
.c19 { background-color: #4a6fe3; }
.c20 { background-color: #d33f6a; }
.c21 { background-color: #8cd78c; }
.c22 { background-color: #f0b98d; }
.c23 { background-color: #f6c4e1; }
.c24 { background-color: #f59ed4; }
.c25 { background-color: #500a78; }
.c26 { background-color: #aa5900; }
.c27 { background-color: #004754; }
.c28 { background-color: #86fa88; }
.c29 { background-color: #ffdf66; }
.t1 {
    background-color: #e8622a;
    margin-left: 5.500px;
}
.t2 { background-color: #22a4d8; }
.picked {
    outline: 2px solid #c4c4c4;
}

/* status line */
.statusbar {
    height: 17px;
    padding: 2px 0 0 1px;
    display: flex;
    align-items: center;
    gap: 8px;
    border-bottom: 1px solid #d4d4d4;
}
.coords {
    width: 425px;
    margin-left: 5px;
    letter-spacing: -0.1px;
}
.vsep {
    width: 1px;
    height: 11px;
    margin: 3px 0 0 -8px;
    background-color: #d4d4d4;
}

/* windows taskbar */
.taskbar {
    flex: 1;
    display: flex;
    align-items: center;
    background: linear-gradient(90deg, #e8eef0, #eceef0 30%, #eef0ef);
}
.weather {
    width: 352px;
    padding-left: 12px;
    display: flex;
    align-items: center;
    position: relative;
}
.weather svg {
    width: 18px;
    height: 15px;
}
.badge {
    position: absolute;
    left: 20px;
    top: -9px;
    width: 10px;
    height: 10px;
    border-radius: 50%;
    background-color: #b8202c;
    color: #fff;
    font-size: 7px;
    font-weight: normal;
    text-align: center;
    line-height: 10px;
}
.wtext {
    margin-left: 4px;
    display: flex;
    flex-direction: column;
    gap: 3px;
}
.clear {
    color: #888;
}
.winlogo {
    width: 16px;
    height: 16px;
    margin-right: 8px;
}
.searchbox {
    width: 146px;
    height: 22px;
    padding: 0 2px 0 8px;
    display: flex;
    align-items: center;
    gap: 7px;
    background-color: #fafafa;
    border-radius: 11px;
    color: #666;
    font-size: 9px;
    letter-spacing: 0;
}
.searchbox svg {
    width: 12px;
    height: 12px;
}
.searchbox .noodles {
    width: 24px;
    height: 16px;
    margin-left: auto;
}
.apps {
    display: flex;
    margin-left: 0.500px;
}
.app {
    width: 29.400px;
    height: 30px;
    display: flex;
    align-items: center;
    justify-content: center;
    position: relative;
}
.app svg {
    width: 16px;
    height: 16px;
}
.app.cur {
    background-color: #f5f5f6;
}
.app.run::after, .app.cur::after {
    content: "";
    position: absolute;
    bottom: 1px;
    left: 13px;
    width: 3px;
    height: 1px;
    background-color: #777;
}
.app.cur::after {
    left: 8px;
    width: 13px;
    height: 2px;
    background-color: #3a7ca8;
}
.adobe {
    width: 16px;
    height: 16px;
    display: flex;
    align-items: center;
    justify-content: center;
    border-radius: 2px;
    font-family: "Liberation Sans", sans-serif;
    font-weight: bold;
    font-size: 9px;
}
.ai { background-color: #330000; color: #ff9a00; }
.wd { background-color: #2b6cc4; color: #fff; }
.ps { background-color: #001e36; color: #31a8ff; }
.pr { background-color: #1a0a5e; color: #b0a0ff; }
.tray {
    margin-left: auto;
    padding-right: 12px;
    display: flex;
    align-items: center;
    gap: 8px;
}
.t-chev { width: 10px; height: 10px; margin-right: 2px; }
.t-mic { width: 11px; height: 14px; margin-right: 3px; }
.t-wifi { width: 12px; height: 10px; margin-right: -1px; }
.t-vol { width: 13px; height: 10px; margin-right: -3px; }
.t-bell { width: 11px; height: 13px; margin-left: -3px; }
.clock {
    display: flex;
    flex-direction: column;
    align-items: flex-end;
    gap: 3px;
    color: #333;
    font-size: 8.8px;
    letter-spacing: 0;
}
```
